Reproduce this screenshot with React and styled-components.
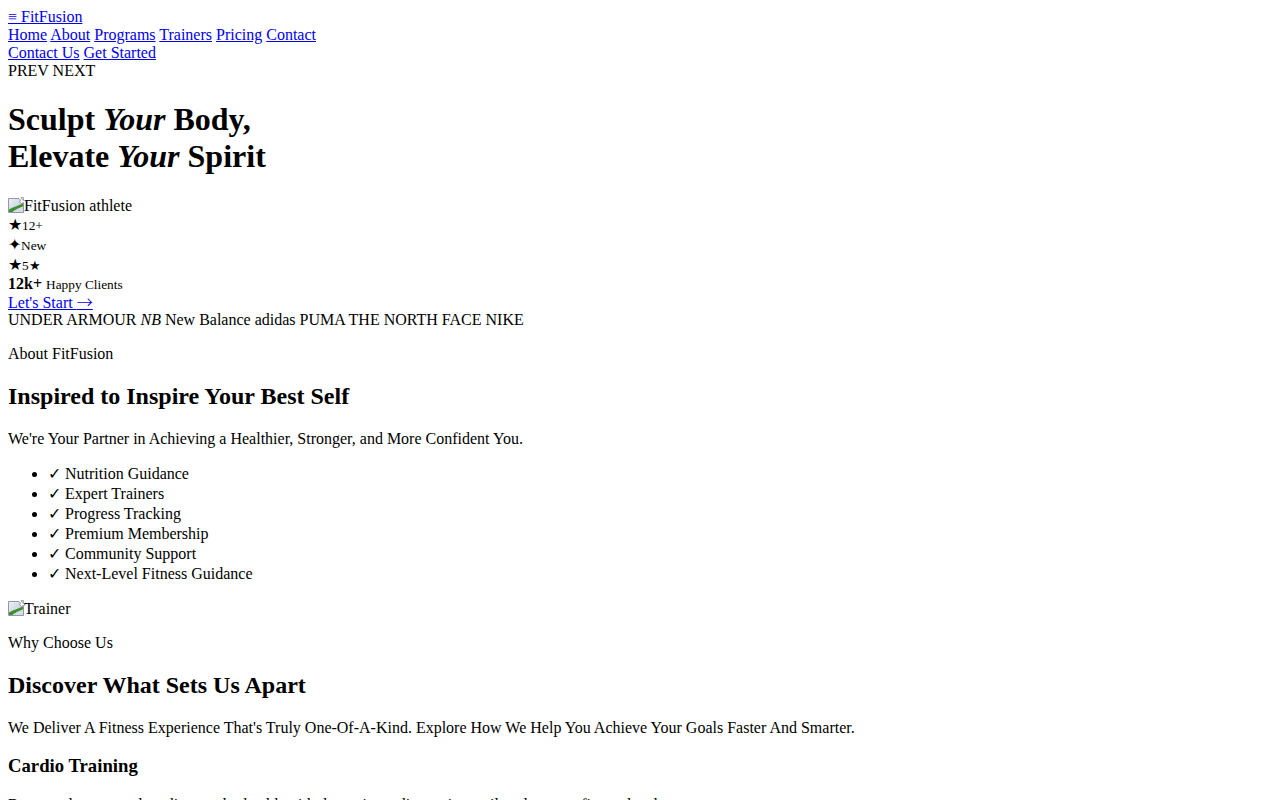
import React from "react";
import styled, { createGlobalStyle } from "styled-components";

const GlobalStyle = createGlobalStyle`
  html, body {
    background: #ffffff;
  }
  body {
    margin: 8px;
    font-family: "Liberation Serif", "Times New Roman", serif;
    font-size: 16px;
    color: #000000;
  }
`;

const Link = styled.a`
  color: #0000ee;
  text-decoration: underline;
  cursor: pointer;
`;

const Header = styled.header`
  display: block;
`;

const Brand = styled.div`
  display: block;
`;

const Nav = styled.nav`
  display: block;
`;

const Actions = styled.div`
  display: block;
`;

const Slider = styled.div`
  display: block;
`;

const HeroTitle = styled.h1`
  font-size: 2em;
  font-weight: bold;
  margin: 0.67em 0;
`;

const Em = styled.em`
  font-style: italic;
`;

const Figure = styled.div`
  display: block;
`;

/* badge rows carry a symbol glyph, which makes them a little taller */
const Stat = styled.div`
  display: block;
  height: ${(p) => (p.$symbol ? "20px" : "auto")};
`;

const Small = styled.small`
  font-size: smaller;
`;

const Strong = styled.strong`
  font-weight: bold;
`;

const CtaRow = styled.div`
  display: block;
  height: 18px;
`;

/* a wide, thin arrow glyph that keeps the row's baseline */
const Arrow = styled.span`
  font-family: "Noto Sans CJK JP", "Liberation Serif", serif;
  font-weight: 300;
  line-height: 1;
`;

const Brands = styled.div`
  display: block;
`;

const Eyebrow = styled.p`
  margin: 1em 0;
`;

const SectionTitle = styled.h2`
  font-size: 1.5em;
  font-weight: bold;
  margin: 0.83em 0;
`;

const Lead = styled.p`
  margin: 1em 0;
`;

const FeatureList = styled.ul`
  list-style: disc;
  margin: 1em 0;
  padding-left: 40px;
`;

const Feature = styled.li`
  height: 20px;
`;

const CardTitle = styled.h3`
  font-size: 1.17em;
  font-weight: bold;
  margin: 1em 0;
`;

const MissingIcon = styled.svg`
  width: 16px;
  height: 16px;
  vertical-align: -2px;
`;

function BrokenImage({ alt }) {
  return (
    <span role="img" aria-label={alt}>
      <MissingIcon viewBox="0 0 16 16">
        <defs>
          <linearGradient id="sky" x1="0" y1="0" x2="1" y2="1">
            <stop offset="0" stopColor="#eef1f6" />
            <stop offset="1" stopColor="#b9c4d4" />
          </linearGradient>
        </defs>
        {/* page body with a torn top-right corner */}
        <path
          d="M0.5 1.5 H11 L12.5 3 L11.5 5 L13.5 6.5 L15.5 5.5 V15.5 H0.5 Z"
          fill="url(#sky)"
          stroke="#8e98a6"
          strokeWidth="1"
        />
        {/* detached corner piece */}
        <path d="M13 0.5 L15.5 0.5 L15.5 3.5 L14 2.5 Z" fill="#dfe4ec" stroke="#8e98a6" strokeWidth="0.8" />
        {/* green hill */}
        <path d="M1 15 V12.5 C4 10.5 7 10 10 8.5 L15 6.5 V9.5 C11 11 7 13 4.5 15 Z" fill="#3f8f2a" />
        <path d="M4.5 15 C7 13 11 11 15 9.5 V15 Z" fill="#d5dce6" />
      </MissingIcon>
      {alt}
    </span>
  );
}

const features = [
  "Nutrition Guidance",
  "Expert Trainers",
  "Progress Tracking",
  "Premium Membership",
  "Community Support",
  "Next-Level Fitness Guidance",
];

export default function App() {
  return (
    <>
      <GlobalStyle />
      <Header>
        <Brand>
          <Link href="#">≡ FitFusion</Link>
        </Brand>
        <Nav>
          <Link href="#">Home</Link> <Link href="#">About</Link>{" "}
          <Link href="#">Programs</Link> <Link href="#">Trainers</Link>{" "}
          <Link href="#">Pricing</Link> <Link href="#">Contact</Link>
        </Nav>
        <Actions>
          <Link href="#">Contact Us</Link> <Link href="#">Get Started</Link>
        </Actions>
      </Header>

      <section>
        <Slider>PREV NEXT</Slider>
        <HeroTitle>
          Sculpt <Em>Your</Em> Body,
          <br />
          Elevate <Em>Your</Em> Spirit
        </HeroTitle>
        <Figure>
          <BrokenImage alt="FitFusion athlete" />
        </Figure>
        <Stat $symbol>
          ★<Small>12+</Small>
        </Stat>
        <Stat $symbol>
          ✦<Small>New</Small>
        </Stat>
        <Stat $symbol>
          ★<Small>5★</Small>
        </Stat>
        <Stat>
          <Strong>12k+</Strong> <Small>Happy Clients</Small>
        </Stat>
        <CtaRow>
          <Link href="#">
            Let's Start <Arrow>→</Arrow>
          </Link>
        </CtaRow>
        <Brands>
          UNDER ARMOUR <Em>NB</Em> New Balance adidas PUMA THE NORTH FACE NIKE
        </Brands>
      </section>

      <section>
        <Eyebrow>About FitFusion</Eyebrow>
        <SectionTitle>Inspired to Inspire Your Best Self</SectionTitle>
        <Lead>We're Your Partner in Achieving a Healthier, Stronger, and More Confident You.</Lead>
        <FeatureList>
          {features.map((f) => (
            <Feature key={f}>✓ {f}</Feature>
          ))}
        </FeatureList>
        <Figure>
          <BrokenImage alt="Trainer" />
        </Figure>
      </section>

      <section>
        <Eyebrow>Why Choose Us</Eyebrow>
        <SectionTitle>Discover What Sets Us Apart</SectionTitle>
        <Lead>
          We Deliver A Fitness Experience That's Truly One-Of-A-Kind. Explore How We Help You Achieve Your Goals Faster And Smarter.
        </Lead>
        <CardTitle>Cardio Training</CardTitle>
        <Lead>
          Boost endurance and cardiovascular health with dynamic cardio sessions tailored to your fitness level.
        </Lead>
      </section>
    </>
  );
}
